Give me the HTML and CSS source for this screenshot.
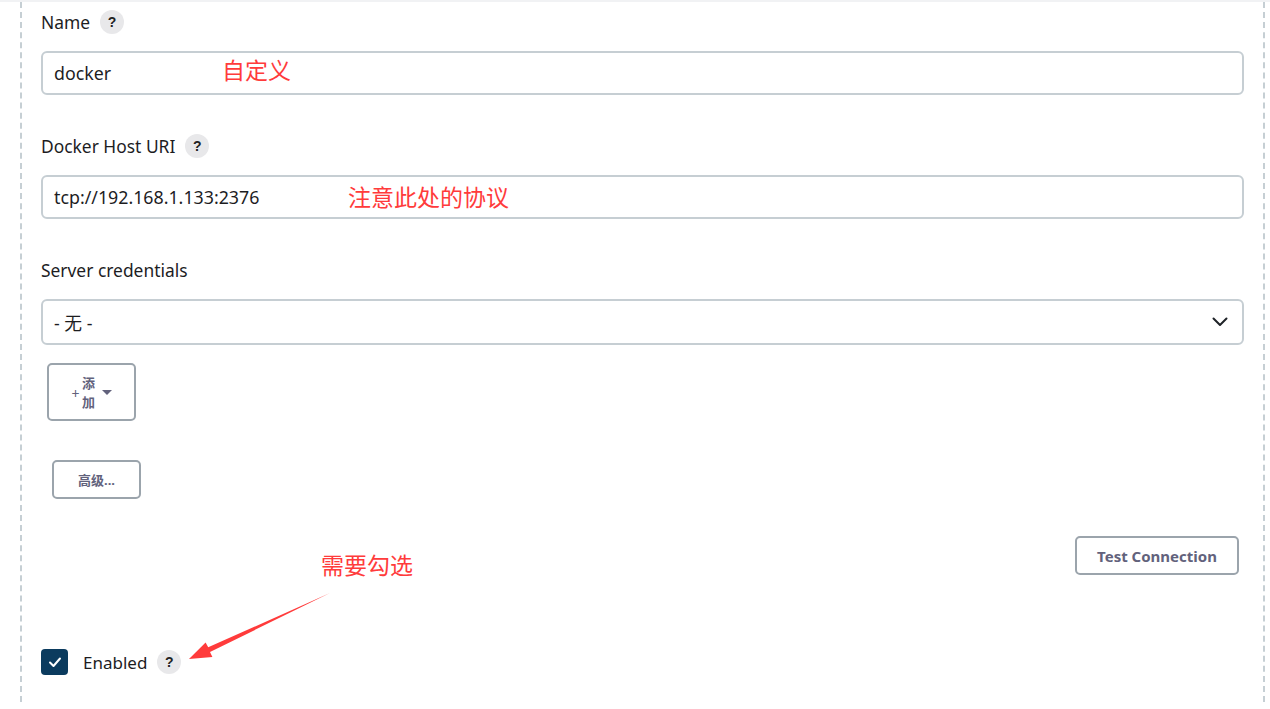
FILE: index.html
```html
<!DOCTYPE html>
<html lang="zh">
<head>
  <meta charset="UTF-8" />
  <title>Docker Cloud</title>
  <link rel="stylesheet" href="styles.css">
</head>
<body>

  <div class="topline"></div>

  <div class="item">

    <div class="field">
      <div class="label">Name <span class="help">?</span></div>
      <div class="input">
        <span class="value">docker</span>
        <span class="note note-name">自定义</span>
      </div>
    </div>

    <div class="field">
      <div class="label">Docker Host URI <span class="help">?</span></div>
      <div class="input">
        <span class="value">tcp://192.168.1.133:2376</span>
        <span class="note note-uri">注意此处的协议</span>
      </div>
    </div>

    <div class="field">
      <div class="label">Server credentials</div>
      <div class="input select">
        <span class="value">- 无 -</span>
        <svg class="chevron" width="16" height="10" viewBox="0 0 16 10">
          <path d="M1.5 1.5 L8 8 L14.5 1.5" fill="none" stroke="#1f2328" stroke-width="2" stroke-linecap="round" stroke-linejoin="round"/>
        </svg>
      </div>
      <button class="btn btn-add">
        <span class="plus">+</span>
        <span class="stack">添加</span>
        <span class="caret"></span>
      </button>
    </div>

    <div class="row">
      <button class="btn btn-adv">高级...</button>
    </div>

    <div class="row row-right">
      <button class="btn btn-test">Test Connection</button>
      <span class="note note-check">需要勾选</span>
    </div>

    <div class="check-row">
      <span class="checkbox">
        <svg width="14" height="12" viewBox="0 0 14 12">
          <path d="M2 6.5 L5.5 10 L12 2.5" fill="none" stroke="#fff" stroke-width="2" stroke-linecap="round" stroke-linejoin="round"/>
        </svg>
      </span>
      <span class="check-label">Enabled</span>
      <span class="help">?</span>
    </div>

    <svg class="arrow" width="1270" height="709" viewBox="0 0 1270 709">
      <polygon points="189,657 205.6,640.4 208.2,645.3 330,591 210,650 212.4,655" fill="#ff3b3b"/>
    </svg>

  </div>

</body>
</html>
```

FILE: styles.css
```css
body {
  margin: 0;
  background-color: #fff;
  font-family: "Noto Sans", "Open Sans", "Noto Sans CJK SC", sans-serif;
  color: #1d1d1f;
  overflow: hidden;
}

.topline {
  height: 2px;
  background-color: #f1f2f4;
}

.item {
  position: relative;
  margin-left: 20px;
  width: 1203px;
  height: 692px;
  padding: 8px 19px 0 19px;
  border-left: 2px dashed #c6cfd4;
  border-right: 2px dashed #c6cfd4;
}

.field {
  margin-bottom: 39px;
}

.label {
  display: flex;
  align-items: center;
  gap: 10px;
  height: 24px;
  font-size: 17.4px;
  margin-bottom: 17px;
}

.help {
  display: inline-flex;
  align-items: center;
  justify-content: center;
  width: 24px;
  height: 24px;
  border-radius: 50%;
  background-color: #e8e8ea;
  font-family: "Liberation Sans", Arial, sans-serif;
  font-size: 14px;
  font-weight: bold;
  color: #222;
}

.input {
  position: relative;
  display: flex;
  align-items: center;
  height: 40px;
  padding: 0 11px;
  border: 2px solid #c6ced3;
  border-radius: 6px;
  font-size: 17.8px;
}

.select {
  height: 42px;
  justify-content: space-between;
  padding-right: 14px;
}

.note {
  color: #ff3b3b;
  font-family: "Noto Sans CJK SC", sans-serif;
  font-size: 23px;
  line-height: 1;
}

.note-name {
  position: absolute;
  left: 179px;
  top: 5px;
}

.note-uri {
  position: absolute;
  left: 305px;
  top: 8px;
}

.btn {
  background: #fff;
  border: 2px solid #9ba4ac;
  border-radius: 5px;
  color: #62627c;
  font-family: "Noto Sans", "Noto Sans CJK SC", sans-serif;
  font-weight: bold;
  cursor: pointer;
  padding: 0;
}

.btn-add {
  display: flex;
  align-items: center;
  justify-content: center;
  width: 89px;
  height: 58px;
  margin: 18px 0 0 6px;
  gap: 2px;
}

.plus {
  font-weight: normal;
  font-size: 14px;
  margin-top: 3px;
}

.stack {
  width: 14px;
  font-size: 13px;
  line-height: 19px;
  font-family: "Noto Sans CJK SC", sans-serif;
  font-weight: bold;
}

.caret {
  width: 0;
  height: 0;
  margin-left: 4px;
  border-left: 5px solid transparent;
  border-right: 5px solid transparent;
  border-top: 5px solid #62627c;
}

.row {
  display: flex;
}

.btn-adv {
  width: 89px;
  height: 39px;
  margin-left: 11px;
  font-size: 13px;
}

.row-right {
  position: relative;
  justify-content: flex-end;
  margin-top: 37px;
  padding-right: 5px;
}

.btn-test {
  width: 164px;
  height: 39px;
  font-size: 15px;
}

.note-check {
  position: absolute;
  left: 280px;
  top: 17px;
}

.check-row {
  display: flex;
  align-items: center;
  margin-top: 74px;
}

.checkbox {
  display: inline-flex;
  align-items: center;
  justify-content: center;
  width: 27px;
  height: 26px;
  border-radius: 4px;
  background-color: #0b3b5e;
}

.check-label {
  font-size: 17px;
  margin: 0 10px 0 15px;
}

.arrow {
  position: absolute;
  left: -22px;
  top: 0;
  pointer-events: none;
}
```
